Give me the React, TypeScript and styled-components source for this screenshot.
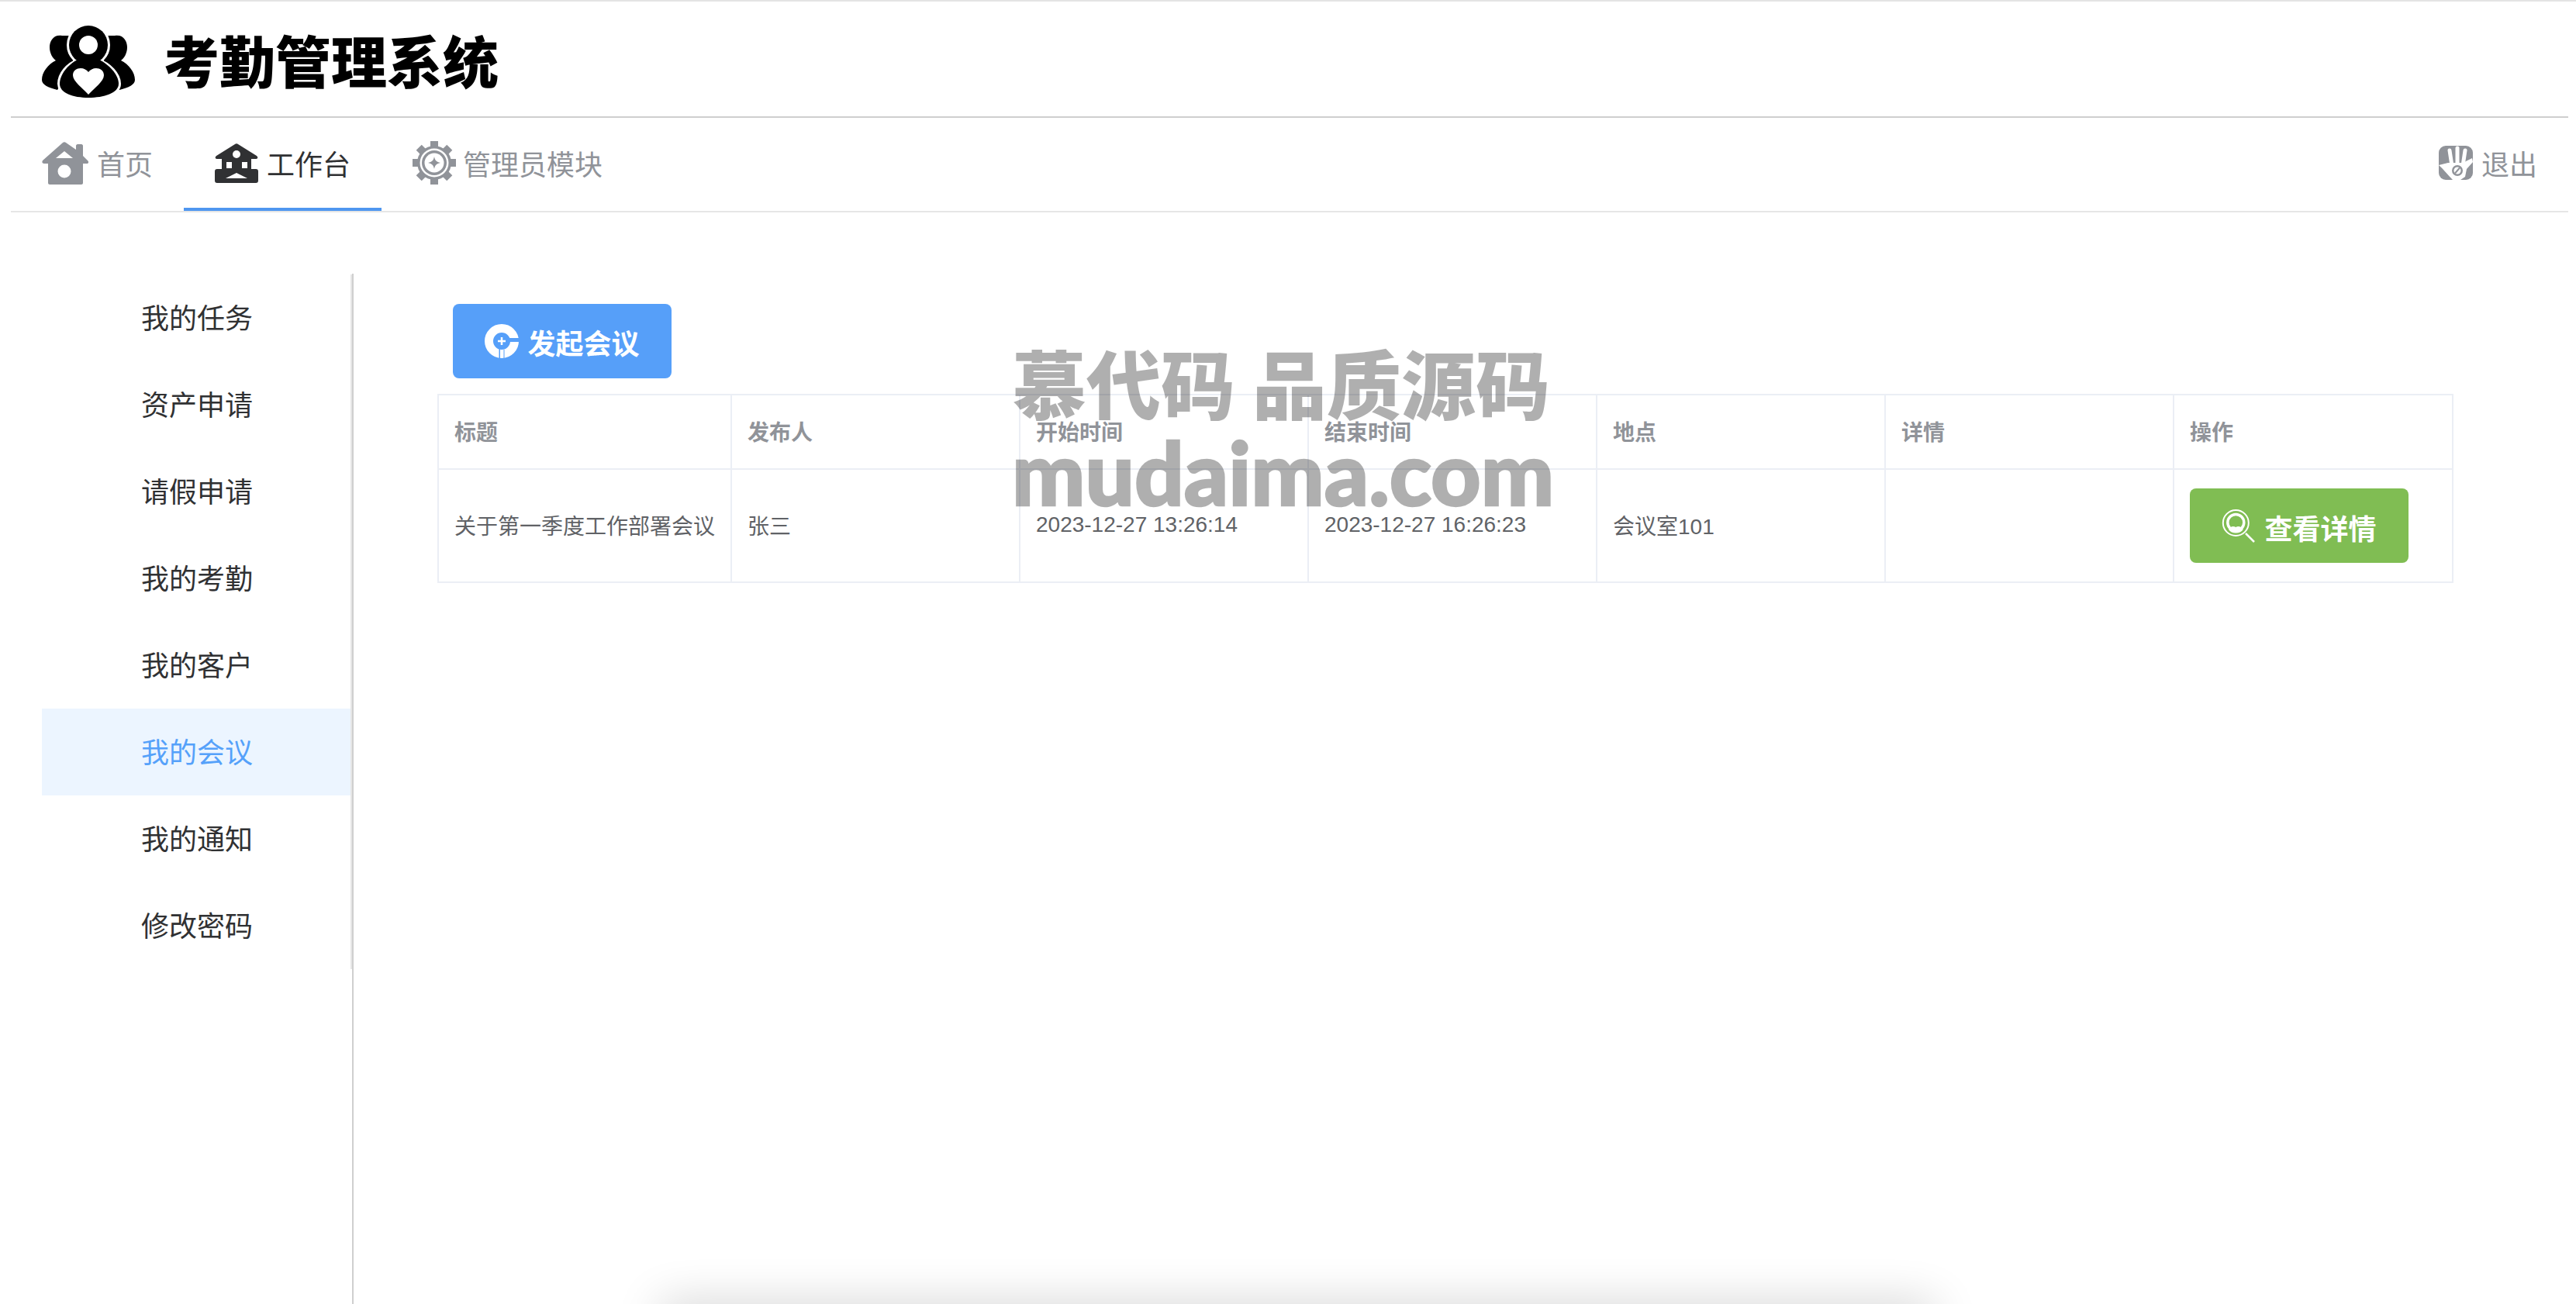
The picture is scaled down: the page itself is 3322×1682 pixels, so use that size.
import styled, { createGlobalStyle } from 'styled-components';

const GlobalStyle = createGlobalStyle`
  html, body {
    margin: 0;
    padding: 0;
    background: #ffffff;
    font-family: "Liberation Sans", "Noto Sans CJK SC", sans-serif;
  }
`;

const Page = styled.div`
  position: relative;
  height: 1682px;
  overflow: hidden;
  border-top: 2px solid #e4e4e4;
  box-sizing: border-box;
  display: flex;
  flex-direction: column;
`;

const Shell = styled.div`
  flex: 1;
  min-height: 0;
  margin: 0 10px 0 14px;
  display: flex;
  flex-direction: column;
`;

const Header = styled.header`
  height: 150px;
  flex: none;
  box-sizing: border-box;
  padding: 6px 0 0 40px;
  display: flex;
  align-items: center;
  gap: 37px;
  border-bottom: 2px solid #cfcfcf;
`;

const Title = styled.h1`
  margin: 0;
  font-size: 72px;
  line-height: 1;
  font-weight: 900;
  color: #000000;
  transform: translateY(3px);
`;

const Nav = styled.nav`
  height: 122px;
  flex: none;
  box-sizing: border-box;
  display: flex;
  justify-content: space-between;
  border-bottom: 2px solid #e6e6e6;
`;

const NavGroup = styled.div`
  display: flex;
`;

const NavItem = styled.a<{ $active?: boolean }>`
  display: flex;
  align-items: center;
  gap: 11px;
  box-sizing: border-box;
  height: 120px;
  padding: 0 40px;
  font-size: 36px;
  color: ${(p) => (p.$active ? '#303133' : '#909399')};
  border-bottom: 4px solid ${(p) => (p.$active ? '#4f96f0' : 'transparent')};
`;

const GearSvg = styled.svg`
  margin-right: -2px;
`;

const Body = styled.div`
  flex: 1;
  min-height: 0;
  display: flex;
  padding: 79px 0 0 40px;
`;

const Aside = styled.aside`
  width: 402px;
  flex: none;
  box-sizing: border-box;
  border-right: 2px solid #cfcfcf;
`;

const Menu = styled.ul`
  margin: 1px 0 0;
  padding: 0;
  list-style: none;
  border-right: 2px solid #e6e6e6;
`;

const MenuItem = styled.li<{ $active?: boolean }>`
  height: 112px;
  line-height: 116px;
  padding-left: 128px;
  font-size: 36px;
  color: ${(p) => (p.$active ? '#55a1fa' : '#303133')};
  background: ${(p) => (p.$active ? '#ecf5ff' : 'transparent')};
`;

const Main = styled.main`
  flex: 1;
  min-width: 0;
  padding: 39px 0 0 108px;
`;

const ActionButton = styled.button<{ $tone: 'blue' | 'green' }>`
  display: inline-flex;
  align-items: center;
  justify-content: center;
  gap: 11px;
  box-sizing: border-box;
  width: 282px;
  height: 96px;
  padding: 0;
  border: none;
  border-radius: 8px;
  font-family: inherit;
  font-size: 36px;
  font-weight: 700;
  color: #ffffff;
  background: ${(p) => (p.$tone === 'blue' ? '#569ff9' : '#80bd53')};
`;

const ButtonLabel = styled.span<{ $drop: number }>`
  transform: translateY(${(p) => p.$drop}px);
`;

const Toolbar = styled.div`
  padding-left: 20px;
  height: 96px;
  margin-bottom: 20px;
`;

const Table = styled.table`
  width: 2598px;
  table-layout: fixed;
  border-collapse: collapse;
  font-size: 28px;
  border: 2px solid #ebeef5;
`;

const HeadCell = styled.th<{ $w: number }>`
  width: ${(p) => p.$w}px;
  height: 96px;
  box-sizing: border-box;
  padding: 0 20px 3px;
  border: 2px solid #ebeef5;
  text-align: left;
  font-weight: 700;
  color: #909399;
`;

const Cell = styled.td<{ $action?: boolean }>`
  height: 146px;
  box-sizing: border-box;
  padding: 0 20px ${(p) => (p.$action ? 0 : 2)}px;
  border: 2px solid #ebeef5;
  color: #606266;
  white-space: nowrap;
`;

const Watermark = styled.div`
  position: absolute;
  left: 1305px;
  top: 433px;
  display: flex;
  flex-direction: column;
  font-weight: 900;
  color: #000000;
  opacity: 0.31;
  white-space: nowrap;
  pointer-events: none;
`;

const WaterTitle = styled.div`
  font-family: "Noto Sans CJK SC", sans-serif;
  font-size: 96px;
  line-height: 114px;
`;

const WaterSite = styled.div`
  font-family: Lato, sans-serif;
  font-size: 112px;
  line-height: 120px;
  -webkit-text-stroke: 2.5px #000000;
`;

const BottomShade = styled.div`
  position: absolute;
  left: 852px;
  width: 1642px;
  top: 100%;
  height: 40px;
  box-shadow: 0 0 60px rgba(0, 0, 0, 0.2);
`;

const LogoIcon = () => (
  <svg width="120" height="93" viewBox="0 0 120 93">
    <path d="M26 13C15 11 10 20 10 28c0 8 4 14 8 17C8 50 0 60 0 70c0 6 8 10 20 13l20-33V13z" fill="#000" />
    <path d="M94 13c11-2 16 7 16 15 0 8-4 14-8 17 10 5 18 15 18 25 0 6-8 10-20 13L80 50V13z" fill="#000" />
    <g fill="#fff" stroke="#fff" strokeWidth="6">
      <circle cx="60" cy="25" r="25" />
      <path d="M46 46C34 50 23 63 23 75c0 12 17 18 37 18s39-6 39-18c0-12-13-25-25-29z" />
    </g>
    <circle cx="60" cy="25" r="25" fill="#000" />
    <path d="M46 44C34 50 23 63 23 75c0 12 17 18 37 18s39-6 39-18c0-12-13-25-25-31z" fill="#000" />
    <circle cx="60" cy="25" r="12" fill="#fff" />
    <path d="M60 89C52 80 40 72 40 64c0-6 5-9 10-9 4 0 8 2 10 5 2-3 6-5 10-5 5 0 10 3 10 9 0 8-12 16-20 25z" fill="#fff" />
  </svg>
);

const HomeIcon = () => (
  <svg width="60" height="55" viewBox="0 0 60 55">
    <path d="M27 1c1-1 3-1 4 0l13 9V5c0-1 1-2 2-2h5c1 0 2 1 2 2v13l6 6c2 2 1 4-1 4h-5v25c0 1-1 2-2 2H10c-1 0-2-1-2-2V28H3c-3 0-3-2-2-4z" fill="#909399" />
    <path d="M29 12l11 9H18z" fill="#fff" />
    <circle cx="29" cy="38" r="8.5" fill="#fff" />
  </svg>
);

const WorkIcon = () => (
  <svg width="56" height="51" viewBox="0 0 56 51">
    <path d="M26 1c1-1 3-1 4 0l24 15c2 2 2 4-2 4h-5v13h6c2 0 3 1 3 3v12c0 2-1 3-3 3H3c-2 0-3-1-3-3V36c0-2 1-3 3-3h6V20H4c-4 0-4-2-2-4z" fill="#303133" />
    <circle cx="28" cy="14" r="5" fill="#fff" />
    <rect x="15" y="24" width="7" height="8" fill="#fff" />
    <rect x="35" y="24" width="7" height="8" fill="#fff" />
    <path d="M28 38l14 7H14z" fill="#fff" />
  </svg>
);

const GearIcon = () => (
  <GearSvg width="56" height="56" viewBox="0 0 56 56">
    {[0, 45, 90, 135, 180, 225, 270, 315].map((a) => (
      <rect key={a} x="23" y="0" width="10" height="12" fill="#909399" transform={`rotate(${a} 28 28)`} />
    ))}
    <circle cx="28" cy="28" r="22" fill="#909399" />
    <circle cx="28" cy="28" r="18.5" fill="#fff" />
    <circle cx="28" cy="28" r="16" fill="#909399" />
    <circle cx="28" cy="28" r="12.5" fill="#fff" />
    <path d="M28 20c1 5 3 7 8 8-5 1-7 3-8 8-1-5-3-7-8-8 5-1 7-3 8-8z" fill="#909399" />
  </GearSvg>
);

const HandIcon = () => (
  <svg width="44" height="44" viewBox="0 0 44 44">
    <rect width="44" height="44" rx="9" fill="#909399" />
    <path d="M0 25l12-3 20 0 3-2 8-4 1 5-8 9-2 10-6 4H18C12 38 6 30 0 25z" fill="#fff" />
    <g stroke="#fff" strokeWidth="5" strokeLinecap="round">
      <path d="M14 6l3 20" />
      <path d="M24 3v22" />
      <path d="M34 6l-3 20" />
    </g>
    <circle cx="24" cy="32" r="7" fill="#909399" />
    <circle cx="24" cy="32" r="4.5" fill="#fff" />
    <path d="M27 28.5l-6 7" stroke="#909399" strokeWidth="2" />
  </svg>
);

const MeetingIcon = () => (
  <svg width="44" height="44" viewBox="0 0 44 44">
    <circle cx="22" cy="22" r="16.5" fill="none" stroke="#fff" strokeWidth="11" />
    <rect x="32" y="18" width="12" height="5" fill="#569ff9" />
    <rect x="18.5" y="32" width="1.5" height="12" fill="#569ff9" />
    <rect x="24.5" y="33" width="1" height="11" fill="#569ff9" />
    <path d="M22 17v10M17 22h10" stroke="#fff" strokeWidth="2.5" />
  </svg>
);

const SearchIcon = () => (
  <svg width="44" height="43" viewBox="0 0 44 43" fill="none" stroke="#fff">
    <circle cx="18.3" cy="17.5" r="16.5" strokeWidth="2" />
    <circle cx="18.3" cy="17" r="10.5" strokeWidth="3.5" />
    <path d="M9 26c2-4 6-5 9.300-3 3-2 7-1 9.500 3-4 6-15 6-18.800 0z" fill="#fff" stroke="none" />
    <path d="M31 31l11 11" strokeWidth="2.500" />
  </svg>
);

const menuItems = ['我的任务', '资产申请', '请假申请', '我的考勤', '我的客户', '我的会议', '我的通知', '修改密码'];

const columns = [
  { title: '标题', width: 378 },
  { title: '发布人', width: 372 },
  { title: '开始时间', width: 372 },
  { title: '结束时间', width: 372 },
  { title: '地点', width: 372 },
  { title: '详情', width: 372 },
  { title: '操作', width: 360 },
];

export default function App() {
  return (
    <>
      <GlobalStyle />
      <Page>
        <Shell>
          <Header>
            <LogoIcon />
            <Title>考勤管理系统</Title>
          </Header>
          <Nav>
            <NavGroup>
              <NavItem><HomeIcon />首页</NavItem>
              <NavItem $active><WorkIcon />工作台</NavItem>
              <NavItem><GearIcon />管理员模块</NavItem>
            </NavGroup>
            <NavItem><HandIcon />退出</NavItem>
          </Nav>
          <Body>
            <Aside>
              <Menu>
                {menuItems.map((item) => (
                  <MenuItem key={item} $active={item === '我的会议'}>{item}</MenuItem>
                ))}
              </Menu>
            </Aside>
            <Main>
              <Toolbar>
                <ActionButton $tone="blue"><MeetingIcon /><ButtonLabel $drop={1}>发起会议</ButtonLabel></ActionButton>
              </Toolbar>
              <Table>
                <thead>
                  <tr>
                    {columns.map((c) => (
                      <HeadCell key={c.title} $w={c.width}>{c.title}</HeadCell>
                    ))}
                  </tr>
                </thead>
                <tbody>
                  <tr>
                    <Cell>关于第一季度工作部署会议</Cell>
                    <Cell>张三</Cell>
                    <Cell>2023-12-27 13:26:14</Cell>
                    <Cell>2023-12-27 16:26:23</Cell>
                    <Cell>会议室101</Cell>
                    <Cell></Cell>
                    <Cell $action>
                      <ActionButton $tone="green"><SearchIcon /><ButtonLabel $drop={2}>查看详情</ButtonLabel></ActionButton>
                    </Cell>
                  </tr>
                </tbody>
              </Table>
            </Main>
          </Body>
        </Shell>
        <Watermark>
          <WaterTitle>慕代码 品质源码</WaterTitle>
          <WaterSite>mudaima.com</WaterSite>
        </Watermark>
        <BottomShade />
      </Page>
    </>
  );
}
